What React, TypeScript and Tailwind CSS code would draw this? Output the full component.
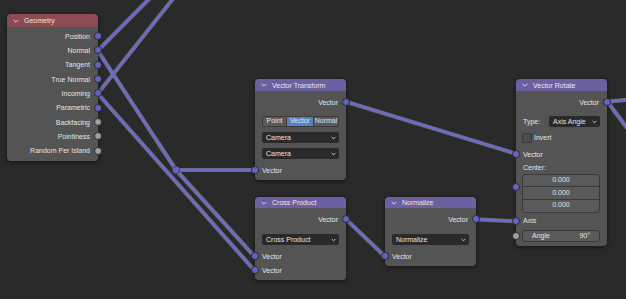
import React from "react";

const WIRE = "#6a6ad0";
const OUT = "#6e6e6e";

function Sock({ side, gray, className }: { side: "l" | "r"; gray?: boolean; className?: string }) {
  return (
    <span
      className={
        "absolute w-[8px] h-[8px] rounded-full border-[0.8px] border-[#2a2a2a] " +
        (side === "l" ? "-left-[4px] " : "-right-[4px] ") +
        (gray ? "bg-[#a1a1a1] " : "bg-[#6464c8] ") +
        (className ?? "top-1/2 -translate-y-1/2")
      }
    />
  );
}

function Chev({ small }: { small?: boolean }) {
  return small ? (
    <svg width="5" height="4" viewBox="0 0 5 4" className="shrink-0">
      <polyline points="0.7,1 2.5,2.8 4.3,1" fill="none" stroke="#d8d8d8" strokeWidth="0.9" />
    </svg>
  ) : (
    <svg width="6" height="4" viewBox="0 0 6 4" className="shrink-0">
      <polyline points="0.6,0.8 3,3.2 5.4,0.8" fill="none" stroke="#e0e0e0" strokeWidth="0.9" />
    </svg>
  );
}

function Header({ title, red, h }: { title: string; red?: boolean; h: string }) {
  return (
    <div
      className={
        "flex items-center rounded-t-[4px] pl-[6px] gap-[5px] text-[#e8e8e8] " +
        h +
        (red ? " bg-[#8d4b53]" : " bg-[#6c60a0]")
      }
    >
      <Chev />
      <span className="leading-none">{title}</span>
    </div>
  );
}

function OutRow({ label }: { label: string }) {
  return (
    <div className="relative h-[14px] flex items-center justify-end pr-[8px]">
      <span className="leading-none">{label}</span>
      <Sock side="r" />
    </div>
  );
}

function InRow({ label, gray }: { label: string; gray?: boolean }) {
  return (
    <div className="relative h-[14px] flex items-center pl-[7px]">
      <span className="leading-none">{label}</span>
      <Sock side="l" gray={gray} />
    </div>
  );
}

function Dropdown({ label }: { label: string }) {
  return (
    <div className="h-[11px] mx-[7px] rounded-[2px] bg-[#2a2a2a] flex items-center justify-between pl-[4px] pr-[3px]">
      <span className="leading-none">{label}</span>
      <Chev small />
    </div>
  );
}

const geoRows: [string, boolean][] = [
  ["Position", false],
  ["Normal", false],
  ["Tangent", false],
  ["True Normal", false],
  ["Incoming", false],
  ["Parametric", false],
  ["Backfacing", true],
  ["Pointiness", true],
  ["Random Per Island", true],
];

const node = "absolute w-[91px] shadow-[0_1px_5px_rgba(0,0,0,0.55)] rounded-[4px]";
const body = "bg-[#545454] rounded-b-[4px]";

export default function App() {
  const wires: [number, number, number, number][] = [
    [97.7, 50.7, 153, -5],
    [97.7, 93.7, 176, -5],
    [97.7, 50.7, 176, 170],
    [176, 170, 254.7, 170],
    [176, 170, 254.7, 256.7],
    [97.7, 93.7, 254.7, 270.7],
    [346, 101.7, 516, 153.7],
    [346, 219.3, 385.3, 256.7],
    [476, 219.3, 516, 221.3],
    [607.5, 101.7, 630, 99.5],
    [607.5, 101.7, 630, 132],
  ];
  return (
    <div className="relative w-[626px] h-[299px] overflow-hidden bg-[#2a2a2a] text-[7px] text-[#e4e4e4] font-['Liberation_Sans','Arial',sans-serif]">
      <svg className="absolute inset-0" width="626" height="299">
        {wires.map((w, i) => (
          <line key={"o" + i} x1={w[0]} y1={w[1]} x2={w[2]} y2={w[3]} stroke={OUT} strokeWidth="4.2" strokeLinecap="round" />
        ))}
        {wires.map((w, i) => (
          <line key={"i" + i} x1={w[0]} y1={w[1]} x2={w[2]} y2={w[3]} stroke={WIRE} strokeWidth="2.4" strokeLinecap="round" />
        ))}
        <circle cx="176" cy="170" r="3.8" fill="#6464c8" stroke="#3a3a3a" strokeWidth="0.8" />
      </svg>

      {/* Geometry */}
      <div className={node + " left-[7px] top-[14px]"}>
        <Header title="Geometry" red h="h-[13px]" />
        <div className={body + " pt-[2px] pb-[3px]"}>
          {geoRows.map(([l, g]) => (
            <div key={l} className="relative h-[14.33px] flex items-center justify-end pr-[8px]">
              <span className="leading-none">{l}</span>
              <Sock side="r" gray={g} />
            </div>
          ))}
        </div>
      </div>

      {/* Vector Transform */}
      <div className={node + " left-[255px] top-[79px]"}>
        <Header title="Vector Transform" h="h-[12px]" />
        <div className={body + " pt-[4px] pb-[3px] flex flex-col"}>
          <OutRow label="Vector" />
          <div className="mt-[7px] mx-[7px] h-[11px] flex">
            <div className="w-[25px] flex items-center justify-center bg-[#5a5a5a] border border-[#3a3a3a] rounded-l-[2px]">Point</div>
            <div className="flex-1 flex items-center justify-center bg-[#5680c2] border-y border-[#3a3a3a]">Vector</div>
            <div className="w-[26px] flex items-center justify-center bg-[#5a5a5a] border border-[#3a3a3a] rounded-r-[2px]">Normal</div>
          </div>
          <div className="mt-[5px]">
            <Dropdown label="Camera" />
          </div>
          <div className="mt-[5px]">
            <Dropdown label="Camera" />
          </div>
          <div className="mt-[4px]">
            <InRow label="Vector" />
          </div>
        </div>
      </div>

      {/* Cross Product */}
      <div className={node + " left-[255px] top-[197px]"}>
        <Header title="Cross Product" h="h-[11px]" />
        <div className={body + " pt-[4px] pb-[3px] flex flex-col"}>
          <OutRow label="Vector" />
          <div className="mt-[8px]">
            <Dropdown label="Cross Product" />
          </div>
          <div className="mt-[4px]">
            <InRow label="Vector" />
            <InRow label="Vector" />
          </div>
        </div>
      </div>

      {/* Normalize */}
      <div className={node + " left-[385px] top-[197px]"}>
        <Header title="Normalize" h="h-[11px]" />
        <div className={body + " pt-[4px] pb-[3px] flex flex-col"}>
          <OutRow label="Vector" />
          <div className="mt-[8px]">
            <Dropdown label="Normalize" />
          </div>
          <div className="mt-[4px]">
            <InRow label="Vector" />
          </div>
        </div>
      </div>

      {/* Vector Rotate */}
      <div className={node + " left-[516px] top-[79px]"}>
        <Header title="Vector Rotate" h="h-[12px]" />
        <div className={body + " relative pt-[4px] pb-[4px] flex flex-col"}>
          <OutRow label="Vector" />
          <div className="mt-[7px] h-[11px] pl-[7px] pr-[7px] flex items-center">
            <span className="w-[26px] leading-none">Type:</span>
            <div className="flex-1 h-full rounded-[2px] bg-[#2a2a2a] flex items-center justify-between pl-[4px] pr-[3px]">
              <span className="leading-none">Axis Angle</span>
              <Chev small />
            </div>
          </div>
          <div className="mt-[5px] h-[11px] pl-[6px] flex items-center gap-[2px]">
            <div className="w-[10px] h-[10px] rounded-[2px] bg-[#4c4c4c] border border-[#393939]" />
            <span className="leading-none">Invert</span>
          </div>
          <div className="mt-[4px]">
            <InRow label="Vector" />
          </div>
          <div className="relative h-[12px] flex items-center pl-[7px]">
            <span className="leading-none">Center:</span>
          </div>
          <div className="relative mt-[1px] ml-[6px] mr-[7px] rounded-[3px] border border-[#3a3a3a] bg-[#5a5a5a] flex flex-col">
            <div className="h-[12px] flex items-center justify-center border-b border-[#3a3a3a]">0.000</div>
            <div className="h-[12.5px] flex items-center justify-center border-b border-[#3a3a3a]">0.000</div>
            <div className="h-[12px] flex items-center justify-center">0.000</div>
          </div>
          <span className="absolute -left-[4px] top-[92px] w-[8px] h-[8px] rounded-full border-[0.8px] border-[#2a2a2a] bg-[#6464c8]" />
          <div className="mt-[1px]">
            <InRow label="Axis" />
          </div>
          <div className="relative mt-[2px] h-[12px]">
            <Sock side="l" gray />
            <div className="h-full ml-[6px] mr-[7px] rounded-[3px] border border-[#3a3a3a] bg-[#5a5a5a] flex items-center justify-between px-[9px]">
              <span className="leading-none">Angle</span>
              <span className="leading-none">90°</span>
            </div>
          </div>
        </div>
      </div>
    </div>
  );
}
